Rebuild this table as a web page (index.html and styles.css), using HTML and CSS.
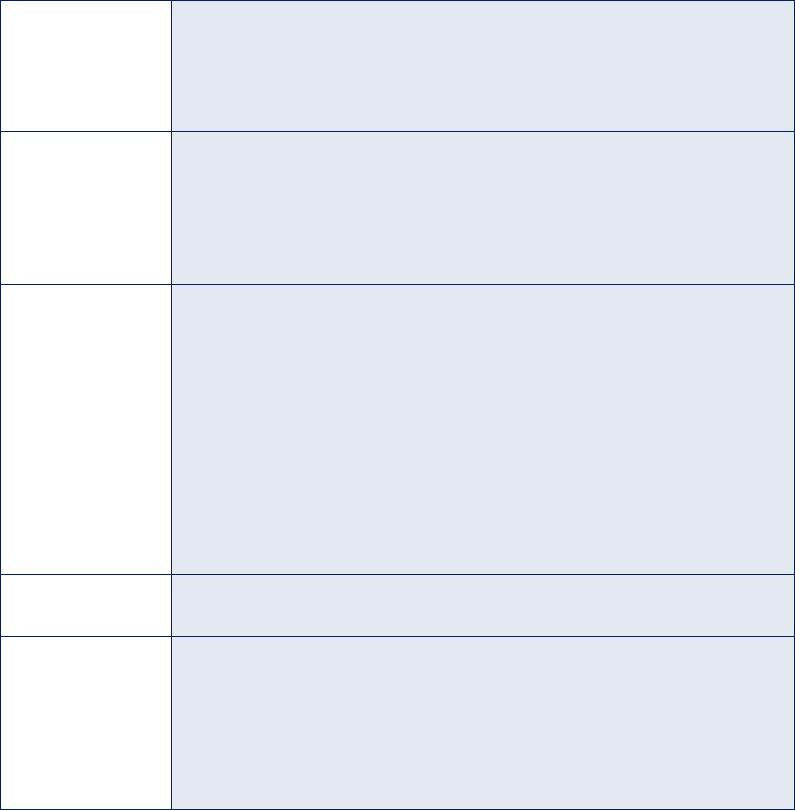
FILE: index.html
```html
<!DOCTYPE html>
<html lang="en">
<head>
  <meta charset="UTF-8" />
  <meta name="viewport" content="width=device-width, initial-scale=1" />
  <title>Table</title>
  <link rel="stylesheet" href="styles.css">
</head>
<body>
  <table class="grid">
    <tr class="row-1">
      <td class="label"></td>
      <td class="value"></td>
    </tr>
    <tr class="row-2">
      <td class="label"></td>
      <td class="value"></td>
    </tr>
    <tr class="row-3">
      <td class="label"></td>
      <td class="value"></td>
    </tr>
    <tr class="row-4">
      <td class="label"></td>
      <td class="value"></td>
    </tr>
    <tr class="row-5">
      <td class="label"></td>
      <td class="value"></td>
    </tr>
  </table>
</body>
</html>
```

FILE: styles.css
```css
body {
  margin: 0;
  background-color: white;
  font-family: 'Liberation Sans', Arial, sans-serif;
}

.grid {
  border-collapse: collapse;
  width: 795px;
  table-layout: fixed;
}

.grid td {
  border: 1px solid #002060;
  padding: 0;
}

.label {
  width: 170px;
  background-color: white;
}

.value {
  background-color: #e4e8f1;
}

.row-1 td { height: 130px; }
.row-2 td { height: 152px; }
.row-3 td { height: 289px; }
.row-4 td { height: 61px; }
.row-5 td { height: 172px; }
```
